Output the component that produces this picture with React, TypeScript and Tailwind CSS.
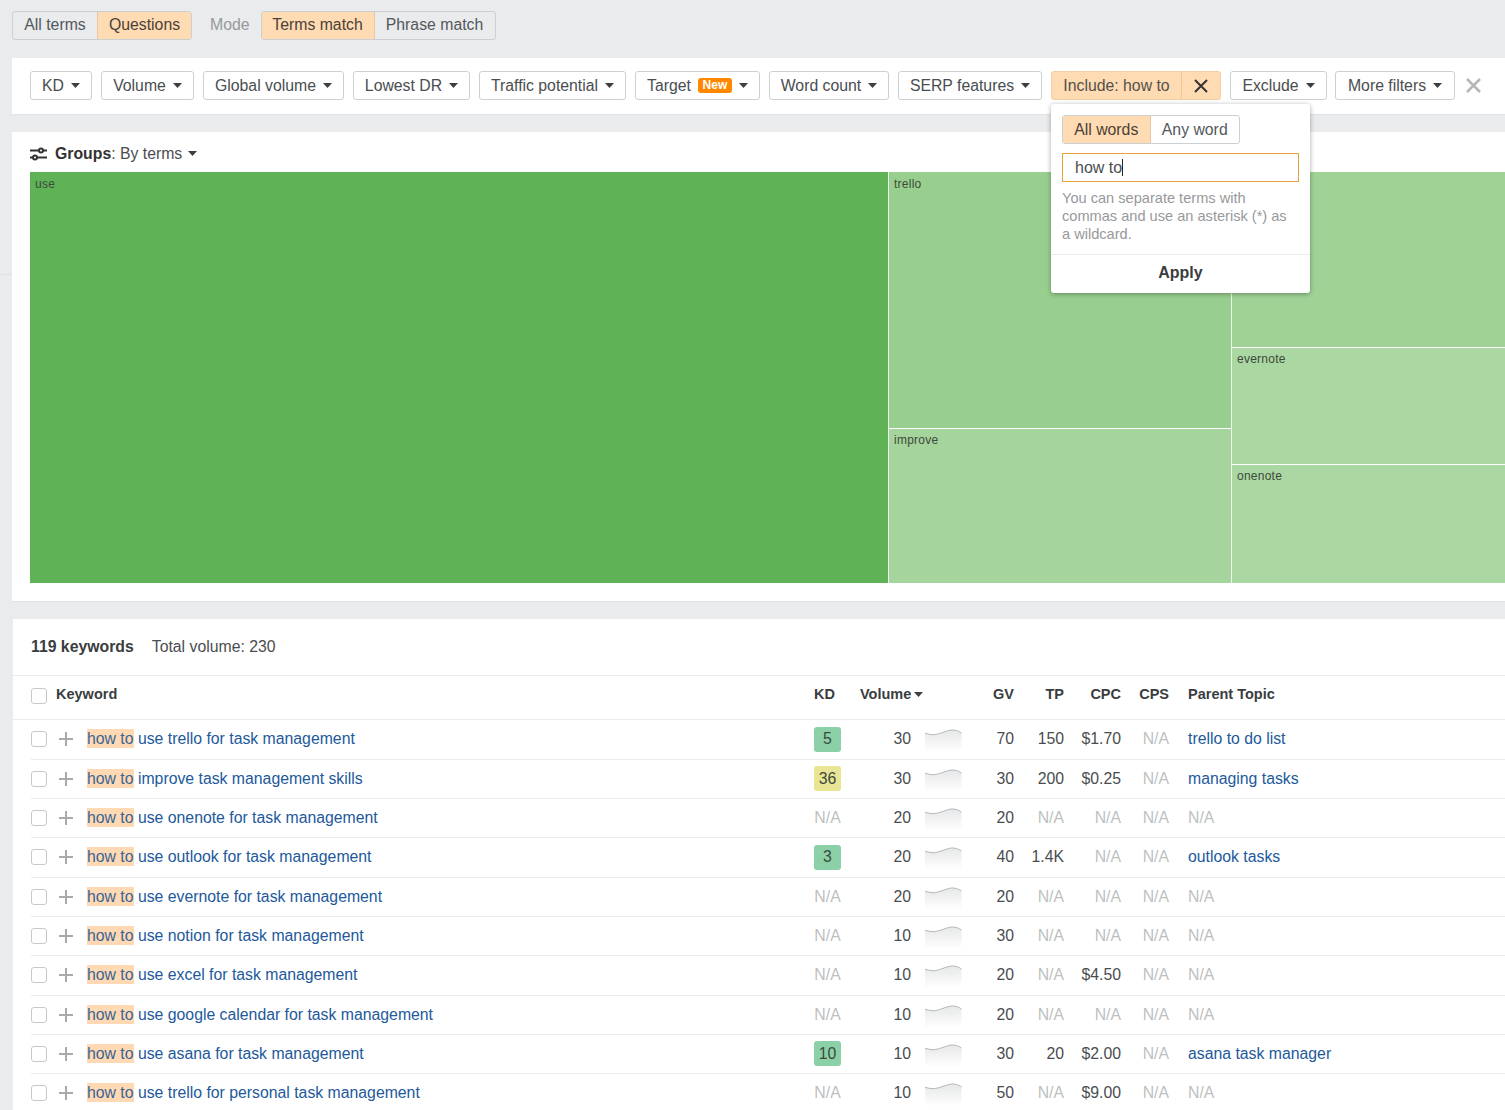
const font = "font-['Liberation_Sans',Arial,sans-serif]";

function Caret({ className = "" }: { className?: string }) {
  return (
    <svg width="9" height="5" viewBox="0 0 9 5" className={className}>
      <path d="M0 0h9L4.5 5z" fill="#3b3f42" />
    </svg>
  );
}

function FilterBtn({ label, w, badge }: { label: string; w: string; badge?: boolean }) {
  return (
    <button className={`${w} h-[29px] shrink-0 flex items-center justify-center gap-[7px] rounded-[3px] border border-[#ccd0d3] bg-white text-[15.800px] text-[#4a4d50]`}>
      <span>{label}</span>
      {badge && (
        <span className="h-[15px] w-[34px] rounded-[3px] bg-[#ff8800] text-[12px] leading-[14px] font-bold text-white">New</span>
      )}
      <Caret />
    </button>
  );
}

function Seg({ label, active, w, right, up }: { label: string; active?: boolean; w: string; right?: boolean; up?: boolean }) {
  return (
    <div
      className={`${w} h-full flex items-center justify-center text-[15.800px] ${active ? "bg-[#ffdbb3] text-[#4a4135]" : "text-[#54585b]"} ${right ? "border-l border-[#e8c8a2]" : ""}`}
    >
      <span className={up ? "-mt-[2px]" : ""}>{label}</span>
    </div>
  );
}

function Cell({ text, w }: { text: string; w: string }) {
  return <div className={`${w} shrink-0 text-right ${text === "N/A" ? "text-[#bdbfc1]" : "text-[#4a4d50]"}`}>{text}</div>;
}

const sparkLine = "M0 5.300C3 6 5 6.700 8 6.700 11 6.700 14 5.600 17 4.700 21 3.400 24 2 27 2 30 2 33 2.500 36.500 5";

function Spark({ id }: { id: string }) {
  return (
    <svg width="37" height="24" viewBox="0 0 37 24" className="shrink-0 ml-[14px] mt-[2px]">
      <defs>
        <linearGradient id={id} x1="0" y1="0" x2="0" y2="1">
          <stop offset="0" stopColor="#e6e7e8" />
          <stop offset="1" stopColor="#ffffff" />
        </linearGradient>
      </defs>
      <path d={`${sparkLine}V24H0z`} fill={`url(#${id})`} />
      <path d={sparkLine} fill="none" stroke="#b6b8ba" strokeWidth="1" />
    </svg>
  );
}

type Row = {
  kw: string;
  kd: string;
  kdColor?: string;
  vol: string;
  gv: string;
  tp: string;
  cpc: string;
  parent: string;
};

const rows: Row[] = [
  { kw: "use trello for task management", kd: "5", kdColor: "bg-[#8bd0a6]", vol: "30", gv: "70", tp: "150", cpc: "$1.70", parent: "trello to do list" },
  { kw: "improve task management skills", kd: "36", kdColor: "bg-[#e9e594]", vol: "30", gv: "30", tp: "200", cpc: "$0.25", parent: "managing tasks" },
  { kw: "use onenote for task management", kd: "N/A", vol: "20", gv: "20", tp: "N/A", cpc: "N/A", parent: "N/A" },
  { kw: "use outlook for task management", kd: "3", kdColor: "bg-[#8bd0a6]", vol: "20", gv: "40", tp: "1.4K", cpc: "N/A", parent: "outlook tasks" },
  { kw: "use evernote for task management", kd: "N/A", vol: "20", gv: "20", tp: "N/A", cpc: "N/A", parent: "N/A" },
  { kw: "use notion for task management", kd: "N/A", vol: "10", gv: "30", tp: "N/A", cpc: "N/A", parent: "N/A" },
  { kw: "use excel for task management", kd: "N/A", vol: "10", gv: "20", tp: "N/A", cpc: "$4.50", parent: "N/A" },
  { kw: "use google calendar for task management", kd: "N/A", vol: "10", gv: "20", tp: "N/A", cpc: "N/A", parent: "N/A" },
  { kw: "use asana for task management", kd: "10", kdColor: "bg-[#8bd0a6]", vol: "10", gv: "30", tp: "20", cpc: "$2.00", parent: "asana task manager" },
  { kw: "use trello for personal task management", kd: "N/A", vol: "10", gv: "50", tp: "N/A", cpc: "$9.00", parent: "N/A" },
];

function Tile({ label, className }: { label: string; className: string }) {
  return (
    <div className={`${className} px-[5px] text-[12px] leading-[14px] tracking-[0.25px] text-[#3d4a3d]`}>{label}</div>
  );
}

export default function App() {
  return (
    <div className={`${font} relative h-[1110px] w-full overflow-hidden bg-[#e9ebed] text-[#333]`}>
      <div className="absolute left-0 top-[274px] h-px w-[12px] bg-[#dfe1e3]" />

      {/* top toggles */}
      <div className="flex h-[58px] items-start pl-[12px] pt-[11px]">
        <div className="flex h-[29px] overflow-hidden rounded-[3px] border border-[#ccd0d3]">
          <Seg label="All terms" w="w-[84px]" up />
          <Seg label="Questions" active w="w-[94px]" right up />
        </div>
        <span className="ml-[18px] mt-[2px] text-[15.800px] text-[#96999c]">Mode</span>
        <div className="ml-[11px] flex h-[29px] overflow-hidden rounded-[3px] border border-[#ccd0d3]">
          <Seg label="Terms match" active w="w-[112px]" up />
          <Seg label="Phrase match" w="w-[121px]" right up />
        </div>
      </div>

      {/* filters */}
      <div className="ml-[12px] flex h-[57px] items-start gap-[9px] border-b border-[#e0e2e4] bg-white pl-[18px] pt-[13px]">
        <FilterBtn label="KD" w="w-[62px]" />
        <FilterBtn label="Volume" w="w-[93px]" />
        <FilterBtn label="Global volume" w="w-[141px]" />
        <FilterBtn label="Lowest DR" w="w-[117px]" />
        <FilterBtn label="Traffic potential" w="w-[147px]" />
        <FilterBtn label="Target" w="w-[125px]" badge />
        <FilterBtn label="Word count" w="w-[120px]" />
        <FilterBtn label="SERP features" w="w-[144px]" />
        <div className="flex h-[29px] w-[170px] shrink-0 overflow-hidden rounded-[3px] border border-[#f3cfa5] bg-[#ffdbb3] text-[15.800px] text-[#54504a]">
          <div className="flex w-[129px] items-center justify-center">Include: how to</div>
          <div className="flex flex-1 items-center justify-center border-l border-[#efc89c]">
            <svg width="14" height="14" viewBox="0 0 14 14">
              <path d="M1 1l12 12M13 1L1 13" stroke="#333" strokeWidth="2" />
            </svg>
          </div>
        </div>
        <FilterBtn label="Exclude" w="w-[97px]" />
        <div className="-ml-px">
          <FilterBtn label="More filters" w="w-[120px]" />
        </div>
        <svg width="15" height="15" viewBox="0 0 15 15" className="ml-[2px] mt-[7px] shrink-0">
          <path d="M1 1l13 13M14 1L1 14" stroke="#b4b7ba" strokeWidth="2.500" />
        </svg>
      </div>

      {/* popup */}
      <div className="absolute left-[1051px] top-[104px] z-10 h-[189px] w-[259px] rounded-[3px] bg-white shadow-[0_1px_5px_rgba(0,0,0,0.35)]">
        <div className="ml-[11px] mt-[11px] flex h-[29px] w-[178px] overflow-hidden rounded-[3px] border border-[#ccd0d3]">
          <Seg label="All words" active w="w-[87px]" />
          <Seg label="Any word" w="w-[90px]" right />
        </div>
        <div className="ml-[11px] mt-[9px] flex h-[29px] w-[237px] items-center border border-[#e8a33d] pl-[12px] text-[16px] text-[#4a4d50]">
          how to<span className="h-[17px] w-px bg-[#222]" />
        </div>
        <p className="ml-[11px] mt-[7px] w-[230px] text-[14.600px] leading-[18px] text-[#97999b]">
          You can separate terms with commas and use an asterisk (*) as a wildcard.
        </p>
        <div className="mt-[11px] flex h-[38px] items-center justify-center border-t border-[#e9ebed] pb-[2px] text-[16px] font-bold text-[#3a3d40]">
          Apply
        </div>
      </div>

      {/* groups */}
      <div className="ml-[12px] mt-[17px] h-[470px] border-b border-[#e0e2e4] bg-white pl-[18px]">
        <div className="flex h-[40px] items-center pt-[3px] text-[15.800px] text-[#4a4d50]">
          <svg width="17" height="14" viewBox="0 0 17 14" className="shrink-0">
            <g stroke="#333" strokeWidth="2" fill="none">
              <path d="M0 3.500h9M13 3.500h4M0 10.500h3M7 10.500h10" />
              <circle cx="11" cy="3.500" r="2" />
              <circle cx="5" cy="10.500" r="2" />
            </g>
          </svg>
          <span className="ml-[8px] font-bold text-[#333]">Groups</span>
          <span>: By terms</span>
          <Caret className="ml-[6px]" />
        </div>
        <div className="flex h-[411px] bg-white">
          <Tile label="use" className="w-[858px] shrink-0 bg-[#5fb255] pt-[5px]" />
          <div className="flex w-[344px] shrink-0 flex-col gap-px border-x border-[#f2f6f1] bg-white">
            <Tile label="trello" className="h-[256px] bg-[#98cf8e] pt-[5px]" />
            <Tile label="improve" className="flex-1 bg-[#a5d49c] pt-[4px]" />
          </div>
          <div className="flex flex-1 flex-col gap-px bg-white">
            <Tile label="" className="h-[175px] bg-[#a0d296]" />
            <Tile label="evernote" className="h-[116px] bg-[#abd7a2] pt-[4px]" />
            <Tile label="onenote" className="flex-1 bg-[#abd7a2] pt-[4px]" />
          </div>
        </div>
      </div>

      {/* keywords */}
      <div className="ml-[13px] mt-[17px] bg-white text-[15.800px]">
        <div className="flex h-[57px] items-center border-b border-[#e9ebed] pb-px pl-[18px]">
          <span className="font-bold text-[#3a3d40]">119 keywords</span>
          <span className="ml-[18px] text-[#4a4d50]">Total volume: 230</span>
        </div>
        <div className="flex h-[44.400px] border-b border-[#e9ebed] pl-[18px] pt-[9px] text-[14.500px] font-bold leading-[18px] text-[#3a3d40]">
          <span className="mt-[3px] h-[16px] w-[16px] rounded-[3px] border border-[#c6c9cc]" />
          <span className="ml-[9px] w-[758px]">Keyword</span>
          <span className="w-[45px]">KD</span>
          <span className="flex w-[117px] items-center gap-[3px] self-start pl-px">
            Volume
            <Caret className="mt-[1px]" />
          </span>
          <span className="w-[38px] text-right">GV</span>
          <span className="w-[50px] text-right">TP</span>
          <span className="w-[57px] text-right">CPC</span>
          <span className="w-[48px] text-right">CPS</span>
          <span className="ml-[19px]">Parent Topic</span>
        </div>
        {rows.map((r, i) => (
          <div key={r.kw} className="ml-[18px] flex h-[39.330px] items-center border-b border-[#e9ebed] pb-[0.6px] text-[#4a4d50]">
            <span className="h-[16px] w-[16px] shrink-0 rounded-[3px] border border-[#c6c9cc]" />
            <svg width="14" height="14" viewBox="0 0 14 14" className="ml-[12px] shrink-0">
              <path d="M7 0v14M0 7h14" stroke="#a8abae" strokeWidth="2" />
            </svg>
            <div className="ml-[14px] w-[727px] shrink-0 whitespace-nowrap text-[#22599b]">
              <span className="bg-[#ffd9b3] py-[1px] text-[#3a6494]">how to</span> {r.kw}
            </div>
            {r.kdColor ? (
              <div className={`${r.kdColor} flex h-[25px] w-[27px] shrink-0 items-center justify-center rounded-[3px] text-[#3a4a40]`}>{r.kd}</div>
            ) : (
              <div className="w-[27px] shrink-0 text-center text-[#bdbfc1]">{r.kd}</div>
            )}
            <Cell text={r.vol} w="w-[70px]" />
            <Spark id={`spark-${i}`} />
            <Cell text={r.gv} w="w-[52px]" />
            <Cell text={r.tp} w="w-[50px]" />
            <Cell text={r.cpc} w="w-[57px]" />
            <Cell text="N/A" w="w-[48px]" />
            <div className={`ml-[19px] whitespace-nowrap ${r.parent === "N/A" ? "text-[#bdbfc1]" : "text-[#22599b]"}`}>{r.parent}</div>
          </div>
        ))}
      </div>
    </div>
  );
}
